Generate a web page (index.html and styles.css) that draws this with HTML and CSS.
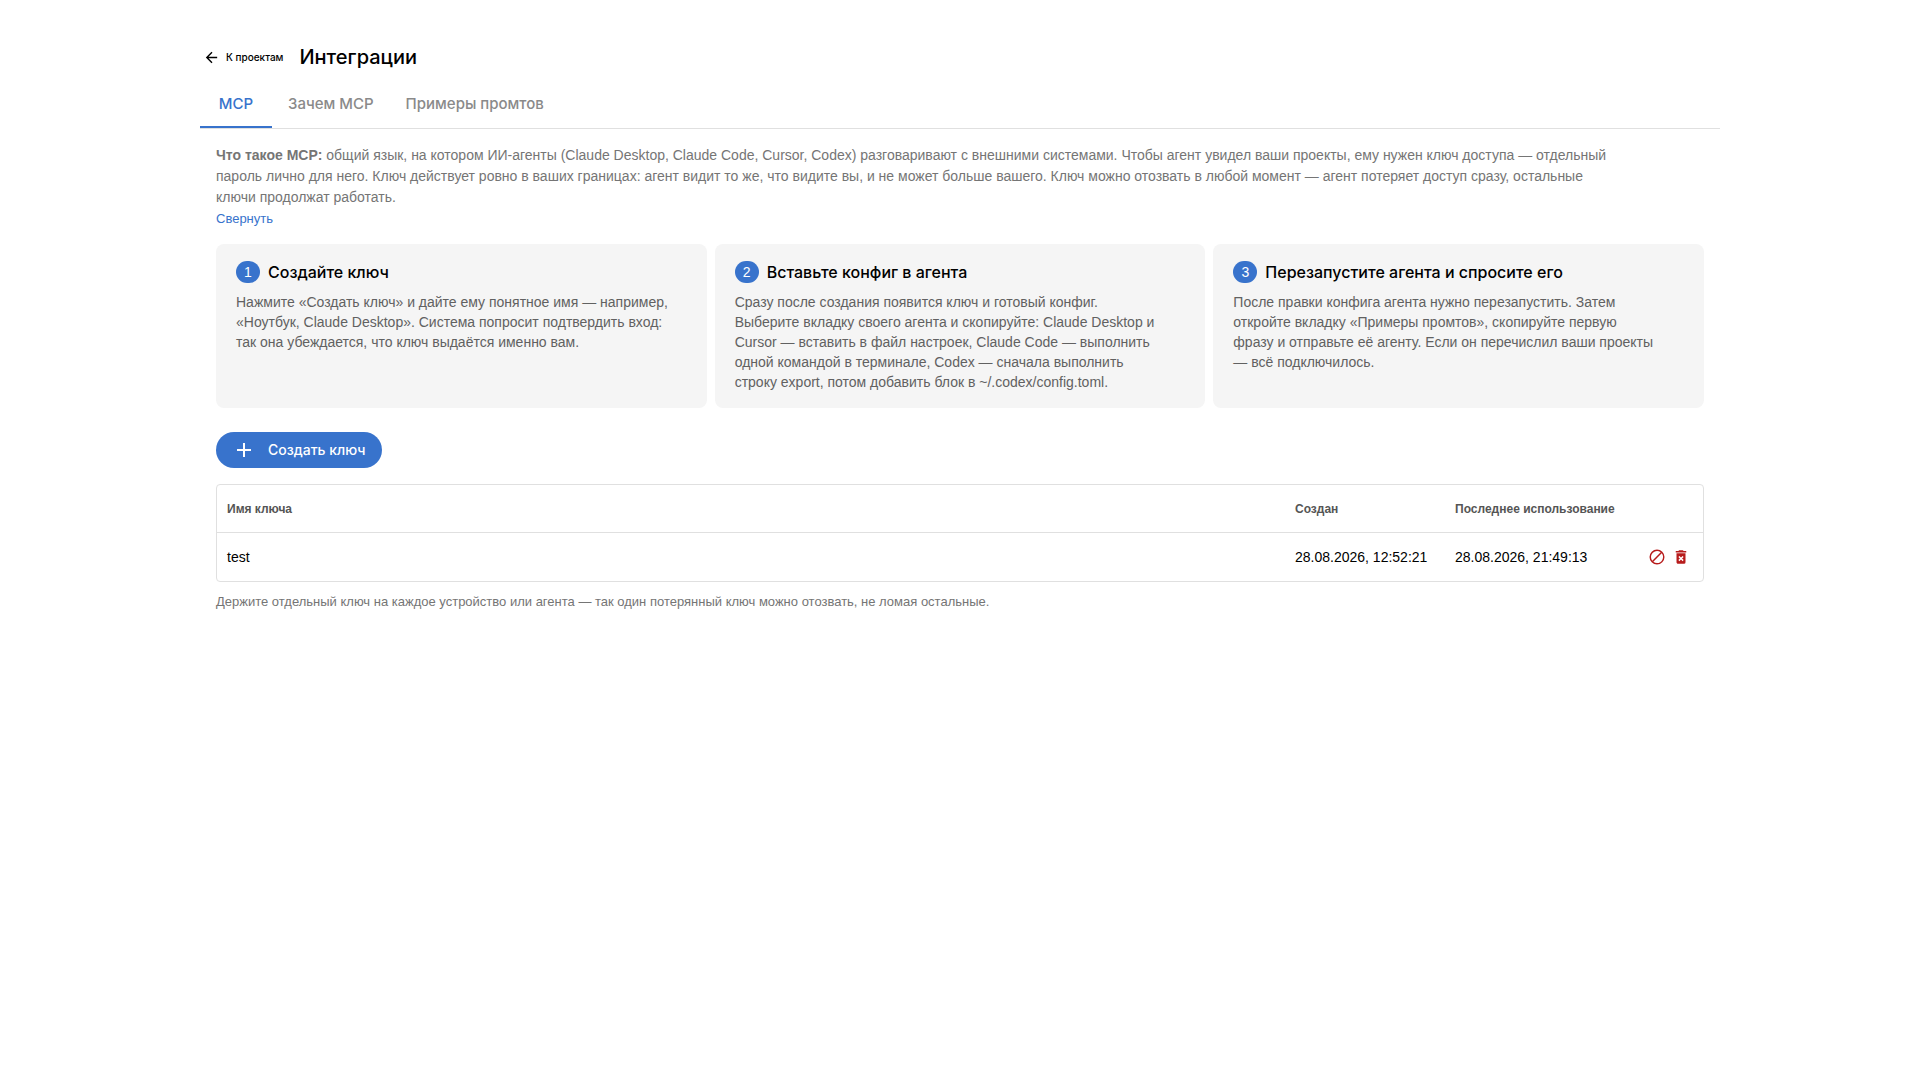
FILE: index.html
```html
<!DOCTYPE html>
<html lang="ru">
<head>
<meta charset="utf-8">
<meta name="viewport" content="width=device-width, initial-scale=1">
<title>Интеграции</title>
<link rel="stylesheet" href="styles.css">
</head>
<body>
<div class="page">
  <header class="header">
    <a class="back" href="#projects">
      <svg class="back-icon" viewBox="0 0 24 24" aria-hidden="true"><path d="M20 11H7.8l5.6-5.6L12 4l-8 8 8 8 1.4-1.4L7.8 13H20z"/></svg>
      К проектам
    </a>
    <h1 class="title">Интеграции</h1>
  </header>
  <nav class="tabs" role="tablist">
    <button class="tab tab-active" role="tab" aria-selected="true">MCP</button>
    <button class="tab" role="tab" aria-selected="false">Зачем MCP</button>
    <button class="tab" role="tab" aria-selected="false">Примеры промтов</button>
  </nav>
  <main class="panel">
    <p class="intro"><strong>Что такое MCP:</strong> общий язык, на котором ИИ-агенты (Claude Desktop, Claude Code, Cursor, Codex) разговаривают с внешними системами. Чтобы агент увидел ваши проекты, ему нужен ключ доступа — отдельный<br>пароль лично для него. Ключ действует ровно в ваших границах: агент видит то же, что видите вы, и не может больше вашего. Ключ можно отозвать в любой момент — агент потеряет доступ сразу, остальные<br>ключи продолжат работать.</p>
    <button class="collapse">Свернуть</button>
    <ol class="steps">
      <li class="step">
        <h2 class="step-title"><span class="badge">1</span>Создайте ключ</h2>
        <p class="step-text">Нажмите «Создать ключ» и дайте ему понятное имя — например,<br>«Ноутбук, Claude Desktop». Система попросит подтвердить вход:<br>так она убеждается, что ключ выдаётся именно вам.</p>
      </li>
      <li class="step">
        <h2 class="step-title"><span class="badge">2</span>Вставьте конфиг в агента</h2>
        <p class="step-text">Сразу после создания появится ключ и готовый конфиг.<br>Выберите вкладку своего агента и скопируйте: Claude Desktop и<br>Cursor — вставить в файл настроек, Claude Code — выполнить<br>одной командой в терминале, Codex — сначала выполнить<br>строку export, потом добавить блок в ~/.codex/config.toml.</p>
      </li>
      <li class="step">
        <h2 class="step-title"><span class="badge">3</span>Перезапустите агента и спросите его</h2>
        <p class="step-text">После правки конфига агента нужно перезапустить. Затем<br>откройте вкладку «Примеры промтов», скопируйте первую<br>фразу и отправьте её агенту. Если он перечислил ваши проекты<br>— всё подключилось.</p>
      </li>
    </ol>
    <button class="create">
      <svg class="create-icon" viewBox="0 0 24 24" aria-hidden="true"><path d="M19 13h-6v6h-2v-6H5v-2h6V5h2v6h6z"/></svg>
      Создать ключ
    </button>
    <div class="table-box">
      <table class="keys">
        <thead>
          <tr><th>Имя ключа</th><th class="col-created">Создан</th><th class="col-used">Последнее использование</th><th class="col-actions"></th></tr>
        </thead>
        <tbody>
          <tr>
            <td>test</td>
            <td>28.08.2026, 12:52:21</td>
            <td>28.08.2026, 21:49:13</td>
            <td>
              <div class="actions">
                <button class="action" aria-label="Отозвать"><svg viewBox="0 0 24 24" aria-hidden="true"><path d="M12 2a10 10 0 1 0 0 20 10 10 0 0 0 0-20zM4 12a8 8 0 0 1 12.9-6.3L5.7 16.9A7.9 7.9 0 0 1 4 12zm8 8a7.9 7.9 0 0 1-4.9-1.7L18.3 7.1A8 8 0 0 1 12 20z"/></svg></button>
                <button class="action" aria-label="Удалить"><svg viewBox="0 0 24 24" aria-hidden="true"><path fill-rule="evenodd" d="M6 19c0 1.100.9 2 2 2h8a2 2 0 0 0 2-2V7H6zm2.500-7.100 1.400-1.400 2.100 2.100 2.100-2.100 1.400 1.400-2.100 2.100 2.100 2.100-1.400 1.400-2.100-2.100-2.100 2.100-1.400-1.400 2.100-2.100zM15.500 4l-1-1h-5l-1 1H5v2h14V4z"/></svg></button>
              </div>
            </td>
          </tr>
        </tbody>
      </table>
    </div>
    <p class="note">Держите отдельный ключ на каждое устройство или агента — так один потерянный ключ можно отозвать, не ломая остальные.</p>
  </main>
</div>
</body>
</html>
```
FILE: styles.css
```css
* { box-sizing: border-box; }

body {
  margin: 0;
  background: #fff;
  color: #000;
  font: 14px/20px "Liberation Sans", Arial, sans-serif;
}

h1, h2, p, ol { margin: 0; padding: 0; }

button {
  padding: 0;
  border: 0;
  background: none;
  color: inherit;
  font: inherit;
  cursor: pointer;
}

svg { display: block; fill: currentColor; }

.page {
  max-width: 1568px;
  margin: 0 auto;
  padding: 40px 24px;
}

.header {
  display: flex;
  align-items: center;
  gap: 16px;
  height: 34px;
  padding-left: 3px;
}

.back {
  display: flex;
  align-items: center;
  gap: 6px;
  color: #000;
  font: 500 10px/16px Inter, sans-serif;
  text-decoration: none;
}

.back-icon { width: 17px; height: 17px; }

.title { font: 500 20px/32px Inter, sans-serif; }

.tabs {
  display: flex;
  height: 55px;
  border-bottom: 1px solid #e0e0e0;
}

.tab {
  min-width: 72px;
  padding: 8px 16px 0;
  border-bottom: 2px solid transparent;
  color: #8a8a8a;
  font: 500 15px/20px Inter, sans-serif;
}

.tab-active { border-color: #3873cc; color: #3873cc; }

.panel { padding: 16px; }

.intro { color: #757575; line-height: 21px; }

.collapse { display: block; color: #3873cc; font-size: 13px; line-height: 22px; }

.steps {
  display: grid;
  grid-template-columns: repeat(3, 1fr);
  gap: 8px;
  margin-top: 14px;
  list-style: none;
}

.step {
  padding: 16px 20px;
  border-radius: 8px;
  background: #f5f5f5;
}

.step-title {
  display: flex;
  align-items: center;
  gap: 8px;
  font: 500 16px/24px Inter, sans-serif;
}

.badge {
  width: 24px;
  border-radius: 12px;
  background: #3873cc;
  color: #fff;
  font: 14px/22px "Liberation Sans", Arial, sans-serif;
  text-align: center;
}

.step-text { margin-top: 8px; color: #616161; }

.create {
  display: flex;
  align-items: center;
  gap: 12px;
  height: 36px;
  margin: 24px 0 16px;
  padding: 0 16px;
  border-radius: 18px;
  background: #3873cc;
  color: #fff;
  font: 500 14px/20px Inter, sans-serif;
}

.create-icon { width: 24px; height: 24px; }

.table-box { border: 1px solid #e0e0e0; border-radius: 4px; }

.keys { width: 100%; border-spacing: 0; table-layout: fixed; }

.keys th, .keys td { height: 48px; padding: 0 10px; text-align: left; }

.keys th {
  border-bottom: 1px solid #e0e0e0;
  color: #555;
  font-size: 12px;
}

.col-created { width: 160px; }
.col-used { width: 180px; }
.col-actions { width: 78px; }

.actions { display: flex; justify-content: flex-end; gap: 6px; padding-right: 3px; }

.action { color: #b71c1c; }

.action svg { width: 18px; height: 18px; }

.note { margin-top: 10px; color: #757575; font-size: 13px; }
```
